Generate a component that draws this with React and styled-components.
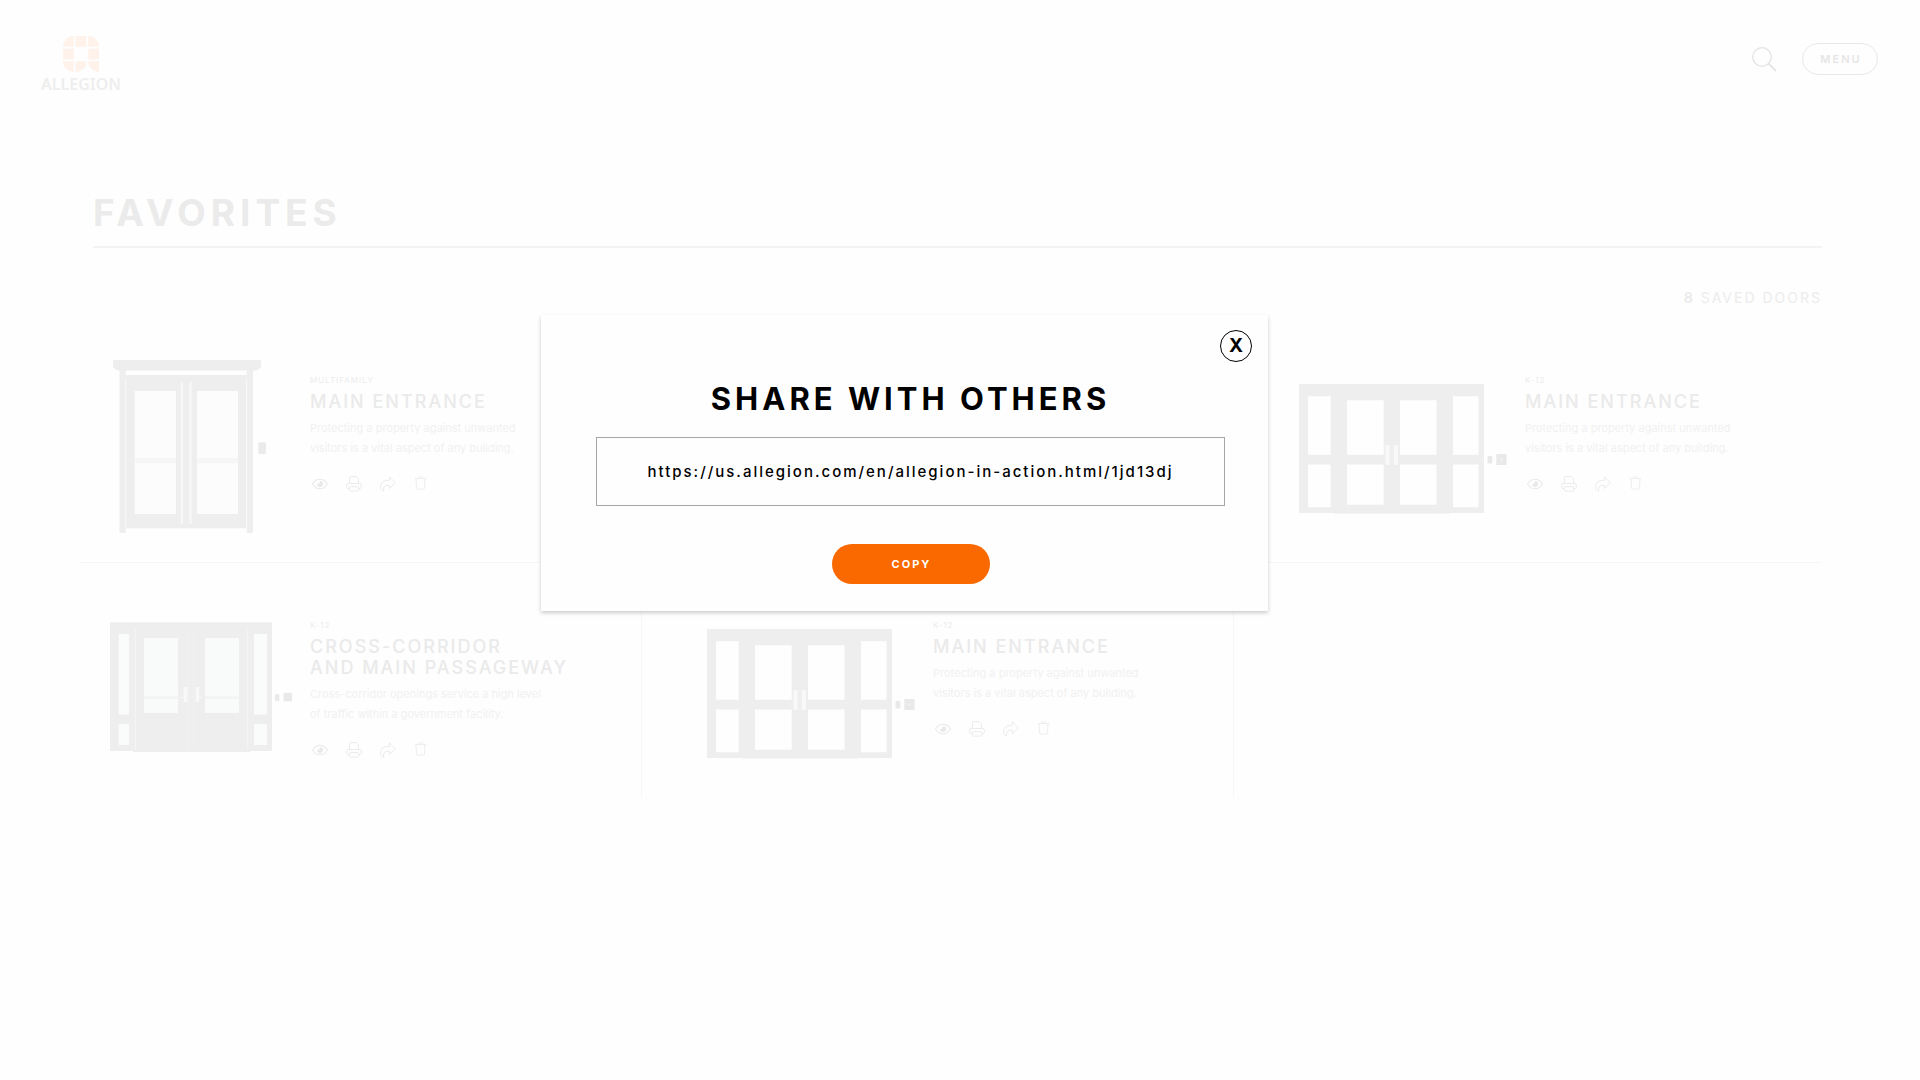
import React, { useState } from "react";
import styled, { createGlobalStyle } from "styled-components";

const GlobalStyle = createGlobalStyle`
  * {
    box-sizing: border-box;
  }

  body {
    margin: 0;
    background: #fefefe;
    font-family: Inter, "Liberation Sans", sans-serif;
  }
`;

const Page = styled.div`
  position: relative;
  min-height: 100vh;
`;

const Header = styled.header`
  display: flex;
  justify-content: space-between;
  align-items: center;
  padding: 36px 42px 0 41px;
`;

const Logo = styled.a`
  display: flex;
  flex-direction: column;
  align-items: center;
  gap: 4px;
  color: #eeeeee;
  font-family: "Noto Sans", sans-serif;
  font-size: 16px;
  font-weight: 600;
  line-height: 16px;
  text-decoration: none;
`;

const HeaderActions = styled.div`
  display: flex;
  align-items: center;
  gap: 25px;
  padding-bottom: 10px;
`;

const IconButton = styled.button`
  display: flex;
  padding: 0;
  border: none;
  background: transparent;
  color: ${(props) => props.$color || "#ebebeb"};
  cursor: pointer;
`;

const MenuButton = styled.button`
  width: 76px;
  height: 32px;
  padding: 0 0 0 2px;
  border: 1px solid #e8e8e8;
  border-radius: 16px;
  background: transparent;
  color: #e6e6e6;
  font-family: inherit;
  font-size: 11px;
  font-weight: 600;
  letter-spacing: 2px;
  cursor: pointer;
`;

const Main = styled.main`
  padding: 99px 98px 40px 80px;
`;

const PageTitle = styled.h1`
  margin: 0 0 0 13px;
  padding-bottom: 11px;
  border-bottom: 2px solid #f3f3f3;
  color: #ebebeb;
  font-size: 37px;
  font-weight: 700;
  line-height: 44px;
  letter-spacing: 5px;
`;

const SavedCount = styled.div`
  margin: 40px 0 10px;
  color: #ececec;
  font-size: 14px;
  line-height: 20px;
  letter-spacing: 2px;
  text-align: right;
`;

const DoorGrid = styled.div`
  display: grid;
  grid-template-columns: 562fr 592fr 588fr;
  grid-template-rows: 245px 235px;
`;

const Card = styled.article`
  display: flex;
  align-items: flex-start;
  padding: 42px 0 0 ${(props) => (props.$first ? 30 : 65)}px;
  border-right: ${(props) => (props.$last ? "none" : "1px solid #f7f7f7")};
  border-bottom: ${(props) => (props.$ruled ? "1px solid #f6f6f6" : "none")};
`;

const Art = styled.svg`
  flex: none;
`;

const CardText = styled.div`
  padding-top: 15px;
`;

const Category = styled.div`
  color: #ececec;
  font-size: 8px;
  line-height: 10px;
  letter-spacing: 1px;
`;

const CardTitle = styled.h2`
  margin: 6px 0;
  color: #eaeaea;
  font-size: 18px;
  font-weight: 500;
  line-height: 21px;
  letter-spacing: 2px;
  white-space: pre-line;
`;

const Description = styled.p`
  margin: 0;
  color: #f1f1f1;
  font-size: 11px;
  line-height: 20px;
  white-space: pre-line;
`;

const CardActions = styled.div`
  display: flex;
  gap: 18px;
  margin: 18px 0 0 2px;
`;

const Overlay = styled.div`
  position: absolute;
  inset: 0;
  display: flex;
  justify-content: center;
  align-items: flex-start;
  padding: 315px 111px 0 0;
`;

const Modal = styled.div`
  display: flex;
  flex-direction: column;
  align-items: center;
  width: 727px;
  padding: 15px 43px 27px 55px;
  background: #fefefe;
  box-shadow: 0 2px 4px rgba(0, 0, 0, 0.2);
`;

const CloseButton = styled.button`
  align-self: flex-end;
  width: 32px;
  height: 32px;
  margin-right: -27px;
  padding: 0;
  border: 1px solid #000;
  border-radius: 50%;
  background: transparent;
  color: #000;
  font-family: inherit;
  font-size: 19px;
  font-weight: 700;
  line-height: 30px;
  cursor: pointer;
`;

const ModalTitle = styled.h2`
  margin: 17px 0 18px;
  color: #000;
  font-size: 31px;
  font-weight: 700;
  line-height: 40px;
  letter-spacing: 4px;
`;

const LinkInput = styled.input`
  width: 100%;
  height: 69px;
  padding: 0 10px;
  border: 1px solid #a6a6a6;
  border-radius: 0;
  outline: none;
  background: transparent;
  color: #000;
  font-family: inherit;
  font-size: 15px;
  font-weight: 500;
  letter-spacing: 2px;
  text-align: center;
`;

const CopyButton = styled.button`
  width: 158px;
  height: 40px;
  margin-top: 38px;
  padding: 0 0 0 2px;
  border: none;
  border-radius: 20px;
  background: #fa6800;
  color: #fff;
  font-family: inherit;
  font-size: 11px;
  font-weight: 700;
  letter-spacing: 2px;
  cursor: pointer;
`;

const LogoMark = () => (
  <svg width="36" height="36" viewBox="0 0 36 36" fill="#fff2ea">
    <path d="M0 10.8A10.8 10.8 0 0 1 10.8 0V10.8Z" />
    <path d="M12.6 0H23.4V10.8H12.6Z" />
    <path d="M25.2 0A10.8 10.8 0 0 1 36 10.8H25.2Z" />
    <path d="M0 12.6H10.8V23.4H0Z" />
    <path d="M25.2 12.6H36V23.4H25.2Z" />
    <path d="M0 25.2H10.8V36A10.8 10.8 0 0 1 0 25.2Z" />
    <path d="M12.6 25.2H23.4A10.8 10.8 0 0 1 12.6 36Z" />
    <path d="M25.2 25.2H36V36A10.8 10.8 0 0 1 25.2 25.2Z" />
  </svg>
);

const SearchIcon = () => (
  <svg width="25" height="25" viewBox="0 0 25 25" fill="none" stroke="currentColor">
    <circle cx="10" cy="10" r="9.3" strokeWidth="1.3" />
    <path d="M16.8 16.8L24 24" strokeWidth="1.8" />
  </svg>
);

const EyeIcon = () => (
  <svg width="16" height="16" viewBox="0 0 16 16">
    <path
      d="M.6 8C2.4 4.9 5 3.2 8 3.2S13.6 4.9 15.4 8C13.6 11.1 11 12.8 8 12.8S2.4 11.1 .6 8Z"
      fill="none"
      stroke="currentColor"
      strokeWidth="1.1"
    />
    <path d="M8 5a3 3 0 1 1-3 3c.9.6 3-.5 3-3Z" fill="currentColor" />
  </svg>
);

const PrintIcon = () => (
  <svg width="16" height="16" viewBox="0 0 16 16" fill="none" stroke="currentColor">
    <path d="M3.5 7.5V1.5Q3.5.6 4.4.6H10.2L12.5 2.9V7.5" />
    <path d="M3.2 12.5H1.8Q.7 12.5.7 11.4V9Q.7 7.5 2.2 7.5H13.8Q15.3 7.5 15.3 9V11.4Q15.3 12.5 14.2 12.5H12.8" />
    <rect x="3.3" y="10.7" width="9.4" height="4.4" rx="1" />
  </svg>
);

const ShareIcon = () => (
  <svg width="16" height="16" viewBox="0 0 16 16" fill="none" stroke="currentColor" strokeLinejoin="round">
    <path d="M9.5.9L15.4 6.7L9.5 12.5V9.2C6 9 4.1 10 3.6 12V15.2C1.6 14.5.6 13 .6 10.8C.6 6.5 4 4.2 9.5 4.2Z" />
  </svg>
);

const TrashIcon = () => (
  <svg width="16" height="16" viewBox="0 0 16 16" fill="none" stroke="currentColor">
    <path d="M.8 2.6H12.2M4.3 2.6V1.6Q4.3.9 5 .9H8Q8.700 .9 8.700 1.600V2.600" />
    <path d="M2 2.600L2.500 12.100Q2.600 13.100 3.600 13.100H9.400Q10.400 13.100 10.500 12.100L11 2.600" />
  </svg>
);

const MultifamilyDoor = () => (
  <Art width="200" height="175" viewBox="0 0 200 175" fill="#eeeeee">
    <path d="M3 0H151V7L147 10.5H7L3 7Z" />
    <path d="M9.5 10H15.7V173H9.5ZM136.7 10H143V173H136.7Z" />
    <path d="M15.7 15H136.7V168.3H15.7Z" />
    <path d="M15.7 20V168M136.7 20V168" stroke="#f8f8f8" />
    <path d="M24.7 31H66V154H24.7ZM87 31H128V154H87Z" fill="#fcfcfc" />
    <path d="M24.7 98H66V103.3H24.7ZM87 98H128V103.3H87Z" fill="#f6f6f6" />
    <path d="M70.7 22H73V164H70.7ZM79.3 22H81.7V164H79.3Z" fill="#f7f7f7" />
    <rect x="148.3" y="82.3" width="7.7" height="11.7" rx="1" fill="#ebebeb" />
  </Art>
);

const PassagewayDoor = () => (
  <Art width="200" height="175" viewBox="0 0 200 175" fill="#eeeeee">
    <path d="M0 17.3H162V146H0Z" />
    <path d="M23 146H140V147H23Z" />
    <path d="M8.7 29H19V109.5H8.7ZM8.7 119H19V140H8.7ZM144 29H157V109.5H144ZM144 119H157V140H144Z" fill="#fafcfb" />
    <path d="M34 33H68V108H34ZM95 33H129V108H95Z" fill="#f9fafa" />
    <path d="M34 91.3H68V94H34ZM95 91.3H129V94H95Z" fill="#f4f4f4" />
    <path d="M25.3 24.5V145M137.7 24.5V145" stroke="#f5f5f5" />
    <path d="M78.5 28V143M83.5 28V143" stroke="#f1f1f1" />
    <path d="M73.7 82H77.3V97H73.7ZM85.7 82H89.3V97H85.7ZM70 92H74V93H70ZM89 92H93V93H89Z" fill="#f8f8f8" />
    <path d="M165 89.3H169.3V96H165ZM173.5 88H182V96.3H173.5Z" fill="#e9e9e9" />
  </Art>
);

const EntranceDoor = () => (
  <Art width="226" height="175" viewBox="0 0 226 175" fill="#eeeeee">
    <path d="M0 24H185V153H0Z" />
    <path d="M35 153H151V154H35Z" fill="#f4f4f4" />
    <path
      d="M9 36.3H31.7V94.7H9ZM9 104.5H31.7V147.3H9ZM48 40.3H84.7V94.7H48ZM48 104.5H84.7V144.7H48ZM101 40.3H137.5V94.7H101ZM101 104.5H137.5V144.7H101ZM154 36.3H179.5V94.7H154ZM154 104.5H179.5V147.3H154Z"
      fill="#fefefe"
    />
    <rect x="86.5" y="85" width="4.3" height="20" rx="1" fill="#f8f8f8" />
    <rect x="94.7" y="85" width="4.3" height="20" rx="1" fill="#f8f8f8" />
    <rect x="188.5" y="96" width="4.8" height="7.5" rx="1" fill="#e9e9e9" />
    <path d="M197.3 94H207.5V105H197.3Z" fill="#e9e9e9" />
    <circle cx="202.5" cy="99.5" r=".8" fill="#fefefe" />
  </Art>
);

const doors = [
  {
    id: 1,
    art: MultifamilyDoor,
    category: "MULTIFAMILY",
    title: "MAIN ENTRANCE",
    description:
      "Protecting a property against unwanted\nvisitors is a vital aspect of any building.",
    first: true,
    ruled: true,
  },
  { id: 2, ruled: true },
  {
    id: 3,
    art: EntranceDoor,
    category: "K-12",
    title: "MAIN ENTRANCE",
    description:
      "Protecting a property against unwanted\nvisitors is a vital aspect of any building.",
    ruled: true,
    last: true,
  },
  {
    id: 4,
    art: PassagewayDoor,
    category: "K-12",
    title: "CROSS-CORRIDOR\nAND MAIN PASSAGEWAY",
    description:
      "Cross-corridor openings service a high level\nof traffic within a government facility.",
    first: true,
  },
  {
    id: 5,
    art: EntranceDoor,
    category: "K-12",
    title: "MAIN ENTRANCE",
    description:
      "Protecting a property against unwanted\nvisitors is a vital aspect of any building.",
  },
];

const DoorCard = ({ art: DoorArt, category, title, description, first, last, ruled }) => {
  return (
    <Card $first={first} $last={last} $ruled={ruled}>
      {DoorArt && (
        <>
          <DoorArt />
          <CardText>
            <Category>{category}</Category>
            <CardTitle>{title}</CardTitle>
            <Description>{description}</Description>
            <CardActions>
              <IconButton $color="#e9e9e9" aria-label="View">
                <EyeIcon />
              </IconButton>
              <IconButton aria-label="Print">
                <PrintIcon />
              </IconButton>
              <IconButton aria-label="Share">
                <ShareIcon />
              </IconButton>
              <IconButton $color="#eeeeee" aria-label="Delete">
                <TrashIcon />
              </IconButton>
            </CardActions>
          </CardText>
        </>
      )}
    </Card>
  );
};

const ShareModal = ({ url, onClose }) => {
  return (
    <Overlay>
      <Modal role="dialog" aria-labelledby="share-title">
        <CloseButton aria-label="Close" onClick={onClose}>
          X
        </CloseButton>
        <ModalTitle id="share-title">SHARE WITH OTHERS</ModalTitle>
        <LinkInput type="text" aria-labelledby="share-title" value={url} readOnly />
        <CopyButton onClick={() => navigator.clipboard.writeText(url)}>
          COPY
        </CopyButton>
      </Modal>
    </Overlay>
  );
};

const App = () => {
  const [open, setOpen] = useState(true);

  return (
    <Page>
      <GlobalStyle />
      <Header>
        <Logo href="#">
          <LogoMark />
          ALLEGION
        </Logo>
        <HeaderActions>
          <IconButton $color="#e4e4e4" aria-label="Search">
            <SearchIcon />
          </IconButton>
          <MenuButton>MENU</MenuButton>
        </HeaderActions>
      </Header>
      <Main>
        <PageTitle>FAVORITES</PageTitle>
        <SavedCount>
          <b>8</b> SAVED DOORS
        </SavedCount>
        <DoorGrid>
          {doors.map((door) => (
            <DoorCard key={door.id} {...door} />
          ))}
        </DoorGrid>
      </Main>
      {open && (
        <ShareModal
          url="https://us.allegion.com/en/allegion-in-action.html/1jd13dj"
          onClose={() => setOpen(false)}
        />
      )}
    </Page>
  );
};

export default App;
